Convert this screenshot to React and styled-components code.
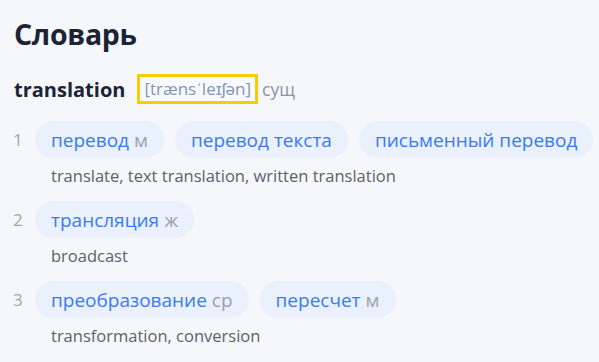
import React from 'react';
import styled, { createGlobalStyle } from 'styled-components';

const meanings = [
  {
    id: 1,
    words: [
      { text: 'перевод', gender: 'м' },
      { text: 'перевод текста' },
      { text: 'письменный перевод' },
    ],
    gloss: 'translate, text translation, written translation',
  },
  {
    id: 2,
    words: [{ text: 'трансляция', gender: 'ж' }],
    gloss: 'broadcast',
  },
  {
    id: 3,
    words: [
      { text: 'преобразование', gender: 'ср' },
      { text: 'пересчет', gender: 'м' },
    ],
    gloss: 'transformation, conversion',
  },
];

const App = () => (
  <>
    <GlobalStyle />
    <Page>
      <Title>Словарь</Title>
      <HeadRow>
        <Headword>translation</Headword>
        <Transcription>[trænsˈleɪʃən]</Transcription>
        <PartOfSpeech>сущ</PartOfSpeech>
      </HeadRow>
      <MeaningList>
        {meanings.map(({ id, words, gloss }) => (
          <Meaning key={id}>
            <ChipRow>
              <Num>{id}</Num>
              <Chips>
                {words.map(({ text, gender }) => (
                  <Chip key={text}>
                    {text}
                    {gender && <Gender>{gender}</Gender>}
                  </Chip>
                ))}
              </Chips>
            </ChipRow>
            <Gloss>{gloss}</Gloss>
          </Meaning>
        ))}
      </MeaningList>
    </Page>
  </>
);

const GlobalStyle = createGlobalStyle`
  body {
    margin: 0;
    background: #f5f7fb;
    font-family: 'Open Sans', 'Liberation Sans', sans-serif;
    overflow: hidden;
  }
`;

const Page = styled.div`
  padding: 14px 0 0 13px;
`;

const Title = styled.h2`
  margin: 0 0 0 1px;
  font-size: 28.5px;
  line-height: 40px;
  font-weight: 700;
  color: #1b2435;
  letter-spacing: -0.3px;
`;

const HeadRow = styled.div`
  display: flex;
  align-items: center;
  margin-top: 20px;
  height: 30px;
`;

const Headword = styled.span`
  margin-left: 1px;
  font-size: 20px;
  font-weight: 700;
  color: #1b2435;
`;

const Transcription = styled.span`
  margin-left: 12px;
  padding: 0 4px;
  height: 24px;
  line-height: 24px;
  border: 3px solid #fccb00;
  font-size: 17px;
  color: #8395b8;
  background: #f7f9fd;
`;

const PartOfSpeech = styled.span`
  margin-left: 4px;
  font-size: 17.5px;
  color: #8b93a3;
`;

const MeaningList = styled.div`
  margin-top: 17px;
  display: flex;
  flex-direction: column;
  gap: 14px;
`;

const Meaning = styled.div``;

const ChipRow = styled.div`
  display: flex;
  align-items: center;
`;

const Num = styled.span`
  width: 22px;
  flex-shrink: 0;
  font-size: 17px;
  color: #a1a6ae;
`;

const Chips = styled.div`
  display: flex;
  flex-wrap: nowrap;
  gap: 11px;
`;

const Chip = styled.span`
  display: inline-flex;
  align-items: center;
  flex-shrink: 0;
  height: 37px;
  padding: 0 16px;
  border-radius: 19px;
  background: #eaf0fc;
  color: #3a7af3;
  font-size: 19px;
  white-space: nowrap;
`;

const Gender = styled.span`
  margin-left: 5px;
  color: #9aa1ab;
`;

const Gloss = styled.div`
  margin-top: 7px;
  padding-left: 38px;
  font-size: 16.5px;
  line-height: 22px;
  color: #5d616a;
`;

export default App;
